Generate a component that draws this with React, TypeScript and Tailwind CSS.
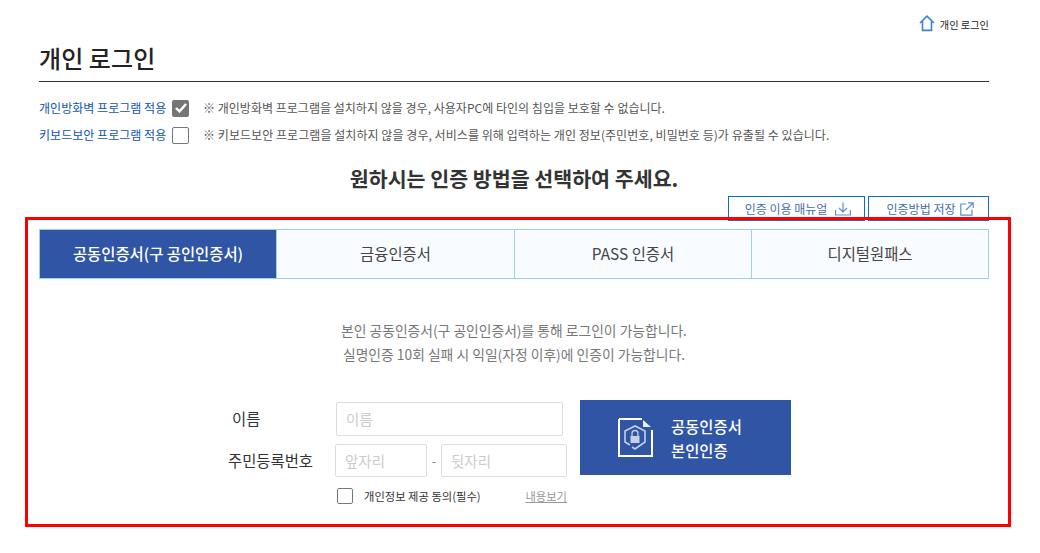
const tabs = ['공동인증서(구 공인인증서)', '금융인증서', 'PASS 인증서', '디지털원패스'];

function HomeIcon() {
  return (
    <svg width="16" height="17" viewBox="0 0 16 17" fill="none" stroke="#3b82d6" strokeWidth="1.6">
      <path d="M1 8 L8 1.2 L15 8 M3.5 6.5 V15.4 H12.5 V6.5" />
    </svg>
  );
}

function DownloadIcon() {
  return (
    <svg width="16" height="14" viewBox="0 0 16 14" fill="none" stroke="#5b8fd0" strokeWidth="1.2">
      <path d="M8 0.5 V9.5 M4 6 L8 10 L12 6 M0.6 8 V13 H15.4 V8" />
    </svg>
  );
}

function LinkIcon() {
  return (
    <svg width="14" height="14" viewBox="0 0 14 14" fill="none" stroke="#5b8fd0" strokeWidth="1.2">
      <path d="M6.5 2 H0.8 V13.2 H12 V7.5 M8 0.8 H13.2 V6 M13 1 L6 8" />
    </svg>
  );
}

function CertIcon() {
  return (
    <svg width="35" height="39" viewBox="0 0 35 39" fill="none">
      <path d="M1 1 H24 M1 1 V38 H34 V12" stroke="#fff" strokeWidth="2" />
      <path d="M25 2 L33 9 H25 Z" fill="#e8edf6" />
      <path d="M12 27 L7 24 V13 L17 8 L27 13 V24 L17 31 L14 29" stroke="#c4d0e6" strokeWidth="1.6" />
      <path d="M14 18 V15.5 A3 3 0 0 1 20 15.5 V18" stroke="#c4d0e6" strokeWidth="1.3" />
      <rect x="12.5" y="18" width="9" height="7" fill="#c4d0e6" />
    </svg>
  );
}

export default function App() {
  return (
    <div className="relative w-[1040px] h-[553px] bg-white overflow-hidden font-['Noto_Sans_CJK_KR',sans-serif] text-[#333]">
      <div className="ml-[39px] w-[950px] flex flex-col">
        {/* breadcrumb */}
        <div className="h-[34px] pt-[15px] flex justify-end items-start gap-[5px]">
          <HomeIcon />
          <span className="text-[10.2px] leading-[20px] text-[#222]">개인 로그인</span>
        </div>

        {/* title */}
        <div className="h-[48px] border-b border-[#333] flex items-center">
          <h1 className="text-[24px] font-medium leading-none tracking-[0.1px] text-[#222]">개인 로그인</h1>
        </div>

        {/* program options */}
        <div className="mt-[18px] flex flex-col gap-[11px] text-[12px] leading-[16px]">
          <div className="flex items-center h-[16px]">
            <span className="w-[133px] text-[#0f55b0] tracking-[0.03px]">개인방화벽 프로그램 적용</span>
            <span className="w-[17px] h-[17px] rounded-[2px] bg-[#767676] flex items-center justify-center">
              <svg width="12" height="10" viewBox="0 0 12 10" fill="none" stroke="#fff" strokeWidth="2.4">
                <path d="M1 5 L4.5 8.4 L11 1" />
              </svg>
            </span>
            <span className="ml-[14px] text-[#555] tracking-[0.02px]">※ 개인방화벽 프로그램을 설치하지 않을 경우, 사용자PC에 타인의 침입을 보호할 수 없습니다.</span>
          </div>
          <div className="flex items-center h-[16px]">
            <span className="w-[133px] text-[#0f55b0] tracking-[0.03px]">키보드보안 프로그램 적용</span>
            <span className="w-[17px] h-[17px] rounded-[2px] border border-[#767676] bg-white" />
            <span className="ml-[14px] text-[#555] tracking-[0.055px]">※ 키보드보안 프로그램을 설치하지 않을 경우, 서비스를 위해 입력하는 개인 정보(주민번호, 비밀번호 등)가 유출될 수 있습니다.</span>
          </div>
        </div>

        {/* heading */}
        <h2 className="mt-[20px] h-[30px] text-center text-[20.6px] font-bold leading-[30px] text-[#333]">
          원하시는 인증 방법을 선택하여 주세요.
        </h2>

        {/* buttons */}
        <div className="mt-[3px] flex justify-end gap-[3px] text-[12px] text-[#3f6fae]">
          <div className="w-[137px] h-[25px] pl-[3px] border border-[#0f6bc9] flex items-center justify-center gap-[8px]">
            <span>인증 이용 매뉴얼</span>
            <DownloadIcon />
          </div>
          <div className="w-[121px] h-[25px] pl-[4px] border border-[#0f6bc9] flex items-center justify-center gap-[5px]">
            <span>인증방법 저장</span>
            <LinkIcon />
          </div>
        </div>

        {/* tabs */}
        <div className="mt-[8px] h-[50px] grid grid-cols-[237px_238px_237px_1fr] border border-[#9fd0ea] bg-[#f8fbff] text-[15.4px] text-[#444]">
          {tabs.map((tab, i) => (
            <div
              key={tab}
              className={`flex items-center justify-center border-[#9fd0ea] ${i < 3 ? 'border-r' : ''} ${
                i === 0 ? 'bg-[#2f55a4] text-white font-medium' : ''
              }`}
            >
              {tab}
            </div>
          ))}
        </div>

        {/* description */}
        <div className="mt-[41px] flex flex-col gap-[4px] items-center text-[13.8px] leading-[20px] text-[#777]">
          <p>본인 공동인증서(구 공인인증서)를 통해 로그인이 가능합니다.</p>
          <p>실명인증 10회 실패 시 익일(자정 이후)에 인증이 가능합니다.</p>
        </div>

        {/* form */}
        <div className="mt-[36px] ml-[188px] flex items-start">
          <div className="w-[352px] flex flex-col">
            <div className="flex items-center h-[34px] mt-[2px]">
              <span className="w-[109px] pl-[5px] text-[15.4px] text-[#333]">이름</span>
              <div className="w-[227px] h-[34px] border border-[#ddd] rounded-[2px] pl-[9px] flex items-center text-[14.5px] text-[#ccc]">이름</div>
            </div>
            <div className="flex items-center h-[33px] mt-[8px]">
              <span className="w-[108px] pl-[1px] text-[15.4px] text-[#333]">주민등록번호</span>
              <div className="w-[92px] h-[33px] border border-[#ddd] rounded-[2px] pl-[9px] flex items-center text-[14.5px] text-[#ccc]">앞자리</div>
              <span className="w-[14px] text-center text-[12px] text-[#777]">-</span>
              <div className="w-[126px] h-[33px] border border-[#ddd] rounded-[2px] pl-[9px] flex items-center text-[14.5px] text-[#ccc]">뒷자리</div>
            </div>
            <div className="flex items-center h-[16px] mt-[11px] ml-[110px] w-[230px]">
              <span className="w-[16px] h-[16px] rounded-[2px] border border-[#767676]" />
              <span className="ml-[11px] text-[11.3px] text-[#333]">개인정보 제공 동의(필수)</span>
              <span className="ml-auto text-[11.3px] text-[#999] underline">내용보기</span>
            </div>
          </div>
          <div className="ml-[1px] w-[211px] h-[75px] bg-[#2f55a4] flex items-center pl-[38px] gap-[18px]">
            <CertIcon />
            <div className="flex flex-col gap-[6px] text-[15.4px] leading-[18px] font-medium text-white">
              <span>공동인증서</span>
              <span>본인인증</span>
            </div>
          </div>
        </div>
      </div>

      {/* red annotation box */}
      <div className="absolute left-[25px] top-[217px] w-[986px] h-[310px] border-[3px] border-[#ff0000]" />
    </div>
  );
}
